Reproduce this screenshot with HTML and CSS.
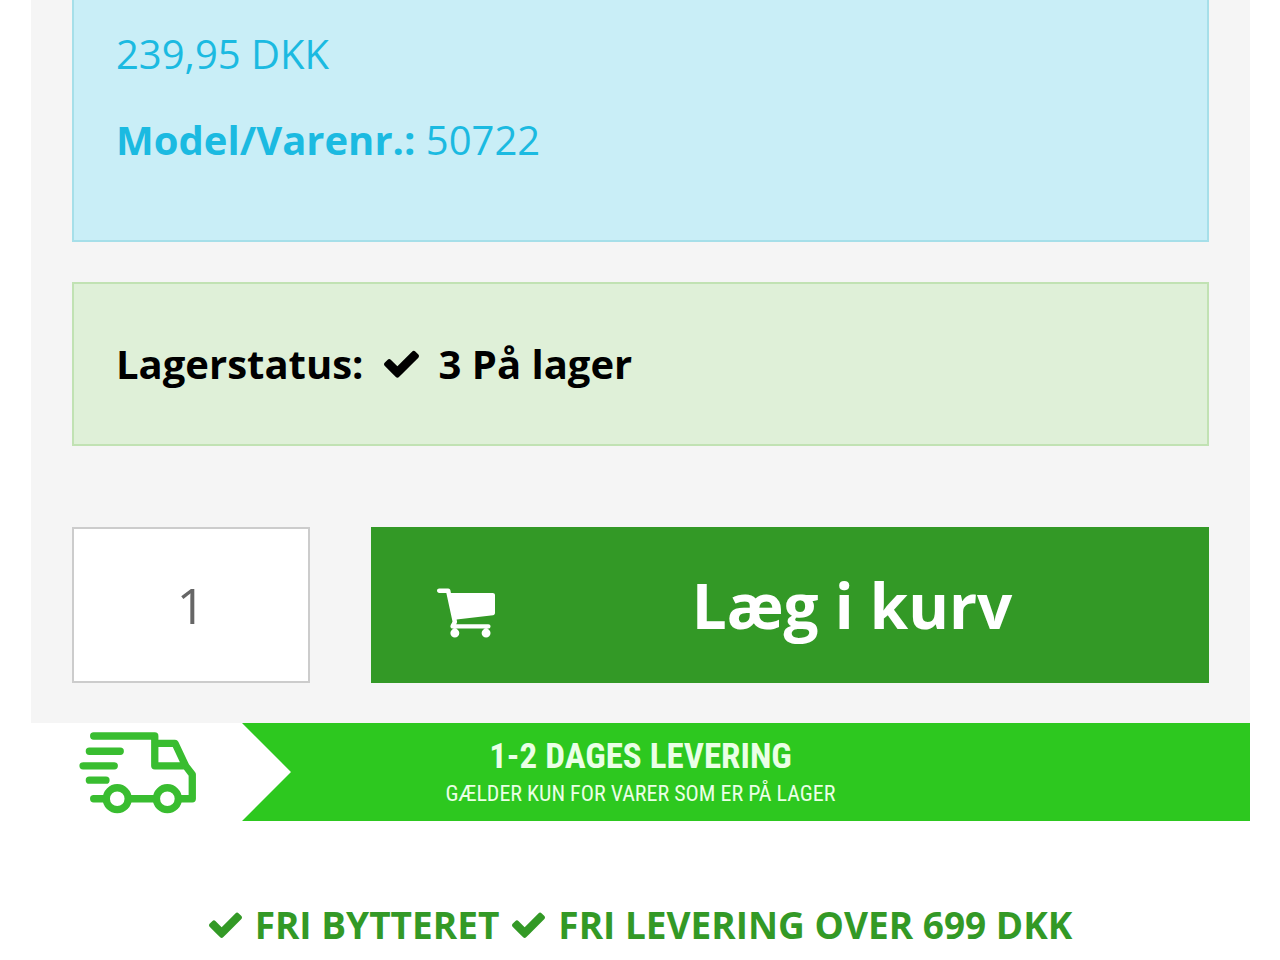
FILE: index.html
```html
<!DOCTYPE html>
<html lang="da">
<head>
    <meta charset="UTF-8">
    <meta name="viewport" content="width=device-width, initial-scale=1">
    <title>Læg i kurv</title>
    <link rel="stylesheet" href="styles.css">
</head>
<body>
    <svg class="sprite" aria-hidden="true">
        <symbol id="check" viewBox="121 309 1550 1213">
            <path d="M1671 566q0 40-28 68l-724 724-136 136q-28 28-68 28t-68-28l-136-136-362-362q-28-28-28-68t28-68l136-136q28-28 68-28t68 28l294 295 656-657q28-28 68-28t68 28l136 136q28 28 28 68z"/>
        </symbol>
    </svg>

    <main class="page">
        <div class="product-panel">
            <div class="box box-info">
                <p>239,95 DKK</p>
                <p><strong>Model/Varenr.:</strong> 50722</p>
            </div>

            <div class="box box-stock">
                <span>Lagerstatus:</span>
                <svg class="check"><use href="#check"/></svg>
                <span>3 På lager</span>
            </div>

            <form class="buy">
                <input class="amount" type="text" inputmode="numeric" value="1" aria-label="Antal">
                <button class="buy-button" type="submit">
                    <svg class="cart" viewBox="64 256 1664 1408" aria-hidden="true">
                        <path d="M704 1536q0 52-38 90t-90 38-90-38-38-90 38-90 90-38 90 38 38 90zm896 0q0 52-38 90t-90 38-90-38-38-90 38-90 90-38 90 38 38 90zm128-1088v512q0 24-16.500 42.500t-40.500 21.500l-1044 122q13 60 13 70 0 16-24 64h920q26 0 45 19t19 45-19 45-45 19h-1024q-26 0-45-19t-19-45q0-11 8-31.500t16-36 21.500-40 15.500-29.500l-177-823h-204q-26 0-45-19t-19-45 19-45 45-19h256q16 0 28.500 6.500t19.500 15.500 13 24.500 8 26 5.500 29.500 4.500 26h1201q26 0 45 19t19 45z"/>
                    </svg>
                    <span class="buy-text">Læg i kurv</span>
                </button>
            </form>
        </div>

        <div class="delivery">
            <div class="delivery-icon">
                <svg class="truck" viewBox="57 50 353 247" aria-hidden="true">
                    <path d="M100 62H284V152H377L345 84H288M377 152L397 178V251H364M280 251H214M128 251H100M87 108H180M68 152H162M87 195H137"/>
                    <circle cx="171" cy="251" r="33"/>
                    <circle cx="322" cy="251" r="33"/>
                </svg>
            </div>
            <div class="delivery-text">
                <div class="delivery-title">1-2 DAGES LEVERING</div>
                <div class="delivery-note">GÆLDER KUN FOR VARER SOM ER PÅ LAGER</div>
            </div>
        </div>

        <div class="usp">
            <svg class="check"><use href="#check"/></svg>
            <span>FRI BYTTERET</span>
            <svg class="check"><use href="#check"/></svg>
            <span>FRI LEVERING OVER 699 DKK</span>
        </div>
    </main>
</body>
</html>
```
FILE: styles.css
```css
* {
    box-sizing: border-box;
}

body {
    margin: 0;
    background: #fff;
    font-family: "Open Sans", sans-serif;
    font-size: 40px;
    font-weight: 400;
    line-height: 58px;
}

.sprite {
    display: none;
}

.page {
    padding: 0 30px 0 31px;
}

.product-panel {
    background: #f5f5f5;
    padding: 0 41px 40px;
}

.box {
    border: 2px solid;
    padding: 51px 42px;
}

.box p {
    margin: 0 0 28px;
}

.box-info {
    border-top: 0;
    border-color: #a6dfe9;
    background: #c9eef7;
    color: #1bbae1;
    padding-top: 25px;
    padding-bottom: 43px;
}

.box strong {
    font-weight: 700;
}

.box-stock {
    display: flex;
    align-items: center;
    gap: 20px;
    margin-top: 40px;
    border-color: #c1e2b3;
    background: #dff0d8;
    color: #000;
    font-weight: 700;
}

.check {
    width: 35px;
    height: 28px;
    fill: currentColor;
}

.buy {
    display: flex;
    gap: 61px;
    margin-top: 81px;
}

.amount {
    width: 238px;
    height: 156px;
    border: 2px solid #ccc;
    border-radius: 0;
    background: #fff;
    color: #666;
    font: inherit;
    font-size: 50px;
    text-align: center;
}

.buy-button {
    flex: 1;
    display: flex;
    align-items: center;
    padding: 0 0 0 66px;
    border: 0;
    background: #339926;
    color: #fff;
    font: inherit;
    font-size: 62px;
    font-weight: 700;
    cursor: pointer;
}

.cart {
    width: 58px;
    height: 50px;
    margin-top: 16px;
    fill: currentColor;
}

.buy-text {
    flex: 1;
}

.delivery {
    display: flex;
    height: 98px;
}

.delivery-icon {
    width: 211px;
    padding: 9px 0 0 48px;
}

.truck {
    display: block;
    width: 118px;
    height: 82px;
    fill: none;
    stroke: #39bd30;
    stroke-width: 22;
    stroke-linecap: round;
    stroke-linejoin: round;
}

.delivery-text {
    flex: 1;
    padding: 13px 211px 0 0;
    background: #2dc81f;
    clip-path: polygon(0 0, 100% 0, 100% 100%, 0 100%, 49px 50%);
    color: #eaffe6;
    font-family: "Roboto Condensed", Roboto, sans-serif;
    text-align: center;
}

.delivery-title {
    font-size: 35px;
    font-weight: 700;
    line-height: 42px;
}

.delivery-note {
    font-size: 22px;
    font-weight: 400;
    line-height: 32px;
}

.usp {
    display: flex;
    justify-content: center;
    align-items: center;
    gap: 13px;
    margin-top: 75px;
    color: #339926;
    font-size: 37px;
    font-weight: 700;
}

.usp .check {
    width: 33px;
    height: 26px;
}
```
